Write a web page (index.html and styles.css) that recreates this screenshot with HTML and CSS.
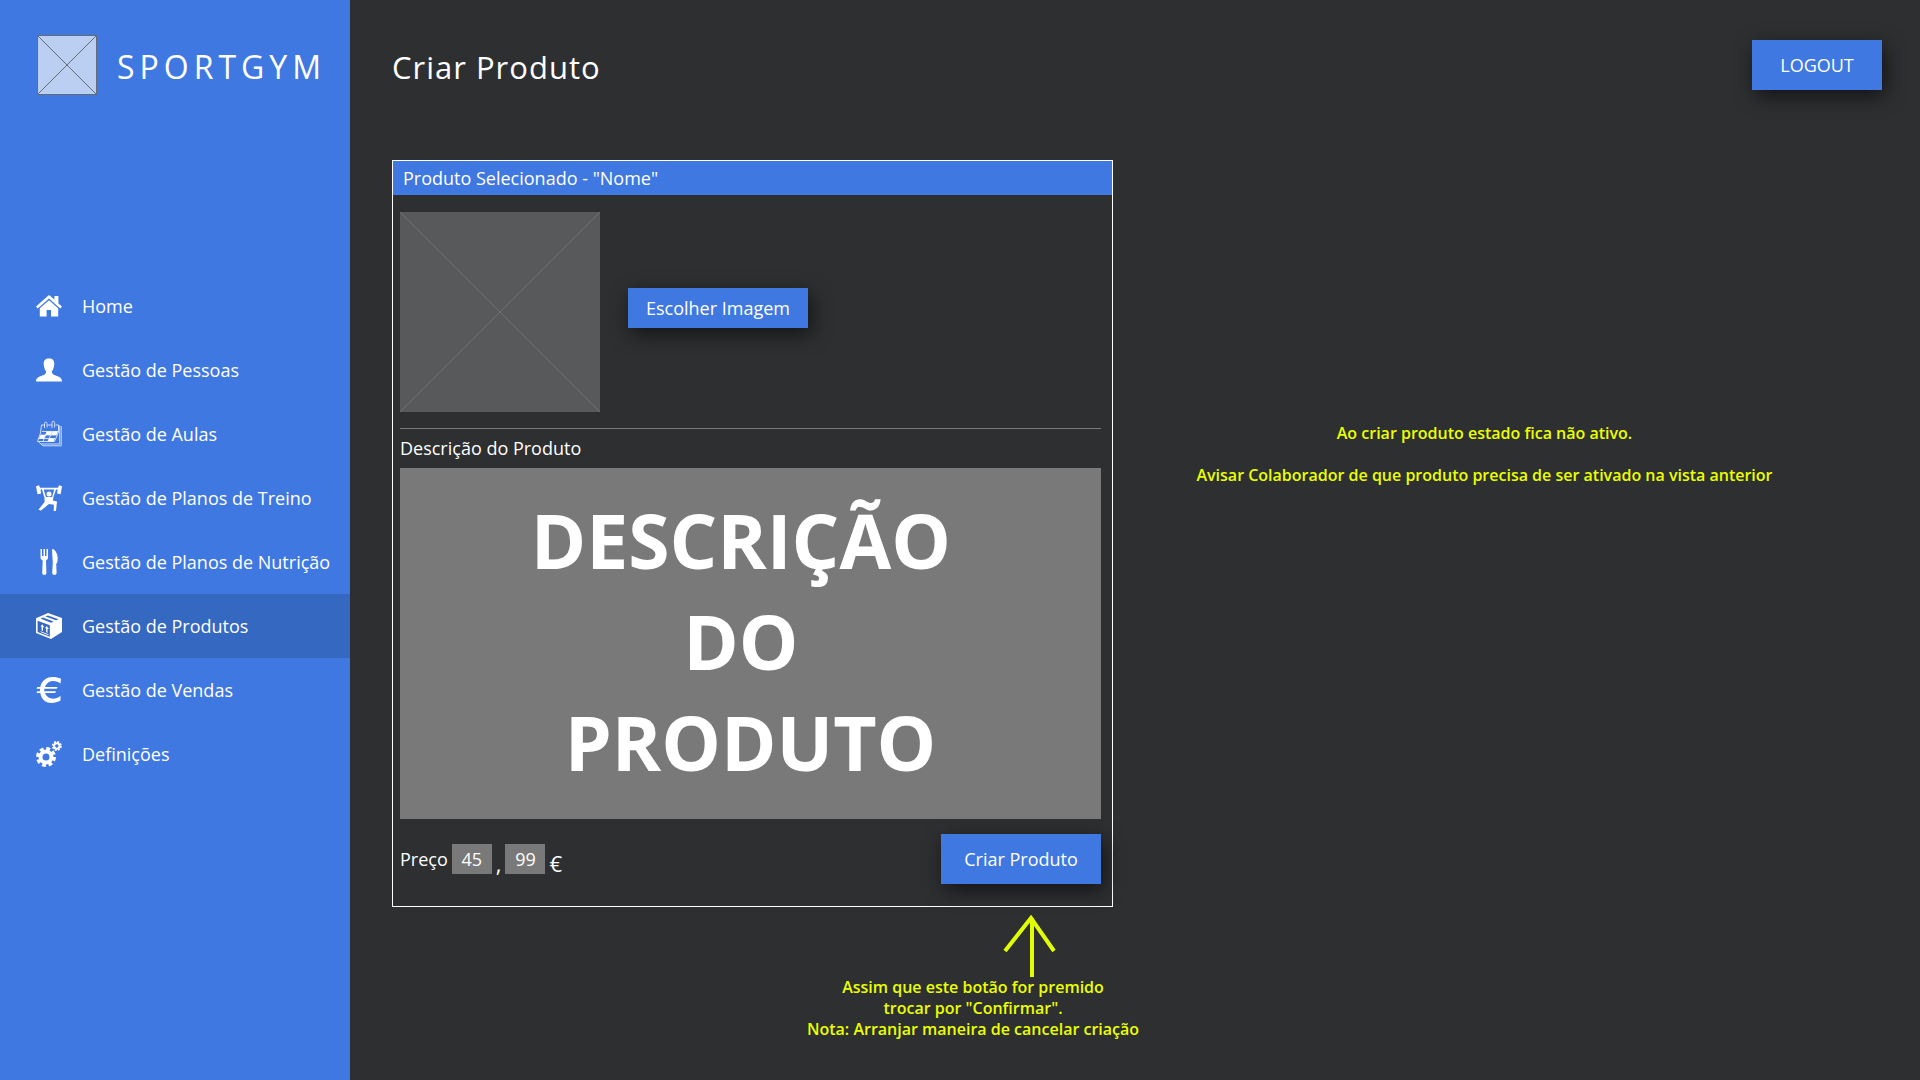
FILE: index.html
```html
<!DOCTYPE html>
<html lang="pt">
<head>
<meta charset="utf-8">
<meta name="viewport" content="width=device-width, initial-scale=1">
<title>SportGym - Criar Produto</title>
<link rel="stylesheet" href="styles.css">
</head>
<body>
<div class="app">
  <aside class="sidebar">
    <div class="brand">
      <svg class="brand-logo" viewBox="0 0 60 60" aria-hidden="true"><rect x=".5" y=".5" width="59" height="59"/><path d="M.5 .5 59.5 59.5M59.5 .5 .5 59.5"/></svg>
      <span class="brand-name">SPORTGYM</span>
    </div>
    <nav class="nav">
      <a class="nav-item" href="#"><svg class="icon" viewBox="0 0 26 26"><path d="M13 2 0 13.600l1.700 1.800L13 5.400l11.300 10 1.700-1.800-3.600-3.200V3h-4v3.600zM13 7.200 3.800 15.300V23.500h6.800v-6.500h4.400v6.500h7.200v-8.200z"/></svg><span>Home</span></a>
      <a class="nav-item" href="#"><svg class="icon" viewBox="0 0 26 26"><path d="M13 1.500c3.600 0 5.500 2 5.300 5.500-.2 3-1 5.500-2.500 7.500.2 2.500 1.200 3 4.500 4.200 3.900 1.400 5.700 2.500 5.700 5.800H0c0-3.300 1.800-4.400 5.700-5.800 3.300-1.200 4.300-1.700 4.500-4.200C8.700 12.500 7.900 10 7.700 7c-.2-3.500 1.700-5.500 5.300-5.500z"/></svg><span>Gestão de Pessoas</span></a>
      <a class="nav-item" href="#"><svg class="icon" viewBox="0 0 26 26"><g fill="none" stroke="#dfe9fb" stroke-width=".9"><path d="M8 4H5.500L4.500 12 1.500 20.500h17L22.500 11V4h-3M11.500 4h4.500"/><path d="M23.700 4.500V23H5L2.500 21M25.200 5v19.800H7L5 23"/><path d="M8.500 7V2.500a1.300 1.300 0 0 1 2.600 0V6.500M16 7V1.500a1.300 1.300 0 0 1 2.600 0V6.500M6 10.500h16M4.500 14h16M3 17.500h16M11 10.500l-4 10M16 10.500l-4 10"/></g><path d="M4.500 14h5L8 17.500H3zM11 10.500h5L14.500 14h-5zM16.500 10.500H22L20.500 14H15zM13 17.500h6l-1.400 3H12z"/></svg><span>Gestão de Aulas</span></a>
      <a class="nav-item" href="#"><svg class="icon" viewBox="0 0 26 26"><path fill-rule="evenodd" d="M0 1.200 3 .2 4 2.800h18L23 .2l3 1L24.600 9.300l-3.500-.8.5-4H20l-2.500 7.500-.6 3.500 4.100 1-1 9.500h-2.300l.2-6.300-4.900-.7-8 6.500-2.600-.8L8.600 17 8.500 13 6 4.500H4.500l.6 4-3.600.8zM7.700 4.500l2.200 7.500h6.200l2.200-7.500z"/><circle cx="13" cy="9" r="2.500"/></svg><span>Gestão de Planos de Treino</span></a>
      <a class="nav-item" href="#"><svg class="icon" viewBox="0 0 26 26"><path d="M4.500 0h1.500v7H7.500V0h1.500v7h1.500V0H12v8.500c0 1.500-.8 2.300-2 3L10.400 24c0 2.600-4.200 2.600-4.200 0L6.700 11.500c-1.400-.7-2.200-1.500-2.200-3zM16 1c0-1.300 1.300-1.300 2.500 0 3 3 4 8.500 2.700 12.500l-1 1.500.4 9c0 2.600-4.400 2.600-4.400 0l.6-10z"/></svg><span>Gestão de Planos de Nutrição</span></a>
      <a class="nav-item nav-item-active" href="#" aria-current="page"><svg class="icon" viewBox="0 0 26 26"><path fill-rule="evenodd" d="M12 0 26 5V19L15 26 0 20V5.200zM1.600 7.800V18.900L13.800 23.700V12.300zM4.500 5.500 15 9.700l2.500-1.200L7 4.500zM9.500 3.400 20 7.300l2.500-1L12 2.600z"/><path d="M6.300 11.300l2 3H7v3.800l-1.400-.6v-3.700l-1.100-.4zM10.800 13l2 3h-1.300v3.800l-1.400-.6v-3.700L9 15.100zM4.500 18.200l8 3.100v.9l-8-3.100z"/></svg><span>Gestão de Produtos</span></a>
      <a class="nav-item" href="#"><svg class="icon" viewBox="0 0 26 26"><path d="M24.500 6.500C20 3 12 2.500 9 10h12.500l-.8 1.700H8.300v2.600H20l-.8 1.700H9c3 7.500 11 6.500 15.500 3v4.500C17 28 6 27 4.300 16H.5l.8-1.700H4v-2.600H.5L1.300 10h3C6.500-.5 17-2 25 1.800z"/></svg><span>Gestão de Vendas</span></a>
      <a class="nav-item" href="#"><svg class="icon" viewBox="0 0 26 26"><g fill="none" stroke="#fff"><circle cx="10" cy="16" r="5.500" stroke-width="4"/><circle cx="10" cy="16" r="8.200" stroke-width="3.600" stroke-dasharray="3.800 2.640"/><circle cx="20.800" cy="5" r="2.700" stroke-width="2"/><circle cx="20.800" cy="5" r="4" stroke-width="2" stroke-dasharray="1.800 1.342"/></g></svg><span>Definições</span></a>
    </nav>
  </aside>
  <main class="main">
    <header class="topbar">
      <h1 class="title">Criar Produto</h1>
      <button class="btn btn-logout" type="button">LOGOUT</button>
    </header>
    <div class="content">
      <div class="product">
        <form class="card">
          <h2 class="card-title">Produto Selecionado - "Nome"</h2>
          <div class="card-body">
            <div class="picture-row">
              <svg class="picture" viewBox="0 0 200 200" aria-hidden="true"><path d="M0 0 200 200M200 0 0 200"/></svg>
              <button class="btn btn-picture" type="button">Escolher Imagem</button>
            </div>
            <hr class="divider">
            <label class="field-label" for="descricao">Descrição do Produto</label>
            <textarea class="description" id="descricao" rows="3">DESCRIÇÃO&nbsp;
DO&nbsp;
PRODUTO</textarea>
            <div class="footer-row">
              <div class="price">
                <label for="euros">Preço</label>
                <input class="price-input" id="euros" type="text" inputmode="numeric" value="45">
                <span class="price-mark">,</span>
                <input class="price-input" type="text" inputmode="numeric" value="99" aria-label="Cêntimos">
                <span class="price-mark">€</span>
              </div>
              <button class="btn btn-create" type="button">Criar Produto</button>
            </div>
          </div>
        </form>
        <div class="callout">
          <svg class="arrow" viewBox="0 0 54 62" aria-hidden="true"><path d="M29 62V3M2 36 28 3 51 36"/></svg>
          <p class="note">Assim que este botão for premido<br>trocar por "Confirmar".<br>Nota: Arranjar maneira de cancelar criação</p>
        </div>
      </div>
      <div class="remarks">
        <p class="note">Ao criar produto estado fica não ativo.</p>
        <p class="note">Avisar Colaborador de que produto precisa de ser ativado na vista anterior</p>
      </div>
    </div>
  </main>
</div>
</body>
</html>
```

FILE: styles.css
```css
* { box-sizing: border-box; }

body {
  margin: 0;
  background: #2e2f31;
  color: #fff;
  font: 18px/24px "Open Sans", "Noto Sans", sans-serif;
}

h1, h2, p { margin: 0; font-weight: 400; }

.app { display: flex; min-height: 100vh; }

.sidebar {
  flex: 0 0 350px;
  background: #3f78e0;
}

.brand {
  display: flex;
  align-items: center;
  gap: 20px;
  height: 274px;
  padding: 35px 0 179px 37px;
}
.brand-logo {
  width: 60px;
  height: 60px;
  fill: #bbcff3;
  stroke: #666c76;
}
.brand-name {
  padding-top: 3px;
  font-size: 32px;
  line-height: 44px;
  letter-spacing: 5px;
}

.nav { display: flex; flex-direction: column; }
.nav-item {
  display: flex;
  align-items: center;
  gap: 20px;
  height: 64px;
  padding-left: 36px;
  color: #fff;
  text-decoration: none;
  white-space: nowrap;
}
.nav-item-active { background: #3568c0; }
.icon { flex: none; width: 26px; height: 26px; fill: #fff; overflow: visible; }

.main { flex: 1; min-width: 0; padding: 40px 38px 40px 42px; }

.topbar {
  display: flex;
  justify-content: space-between;
  align-items: center;
  margin-bottom: 70px;
}
.title {
  padding-top: 4px;
  font-size: 31px;
  line-height: 44px;
  letter-spacing: 1px;
}

.btn {
  border: 0;
  padding: 0;
  background: #3f78e0;
  color: #fff;
  font: inherit;
  box-shadow: 3px 6px 20px rgba(0, 0, 0, .6);
}
.btn-logout { width: 130px; height: 50px; }
.btn-picture { width: 180px; height: 40px; margin-bottom: 8px; }
.btn-create { width: 160px; height: 50px; }

.content { display: grid; grid-template-columns: 721fr 769fr; }

.card { border: 1px solid #fff; }
.card-title {
  padding: 5px 10px;
  background: #3f78e0;
  font-size: 18px;
  line-height: 24px;
}
.card-body {
  display: flex;
  flex-direction: column;
  padding: 17px 11px 22px 7px;
}

.picture-row { display: flex; align-items: center; gap: 28px; padding-bottom: 16px; }
.picture {
  width: 200px;
  height: 200px;
  background: #58595b;
  fill: none;
  stroke: #707173;
}

.divider {
  width: 100%;
  margin: 0;
  border: 0;
  border-top: 1px solid #7a7a7a;
}
.field-label { padding: 7px 0 8px; }

.description {
  display: block;
  width: 100%;
  height: 351px;
  margin: 0 0 15px;
  padding: 22px 0;
  border: 0;
  background: #797979;
  color: #fff;
  font: 700 75px/101px "Open Sans", "Noto Sans", sans-serif;
  text-align: center;
  resize: none;
  overflow: hidden;
}

.footer-row { display: flex; justify-content: space-between; align-items: center; }
.price { display: flex; align-items: center; gap: 4px; }
.price-input {
  width: 40px;
  height: 30px;
  padding: 0;
  border: 0;
  background: #797979;
  color: #fff;
  font: inherit;
  text-align: center;
}
.price-mark { padding-top: 8px; font-size: 22px; }

.callout {
  display: flex;
  flex-direction: column;
  align-items: center;
  width: 330px;
  margin: 8px -25px 0 auto;
}
.arrow {
  align-self: flex-end;
  width: 54px;
  height: 62px;
  margin-right: 81px;
  fill: none;
  stroke: #e1ff00;
  stroke-width: 4;
}

.note {
  color: #eaff00;
  font-size: 16px;
  line-height: 21px;
  font-weight: 600;
  text-align: center;
  white-space: nowrap;
}
.remarks {
  display: flex;
  flex-direction: column;
  gap: 21px;
  padding: 263px 26px 0 0;
}
```
